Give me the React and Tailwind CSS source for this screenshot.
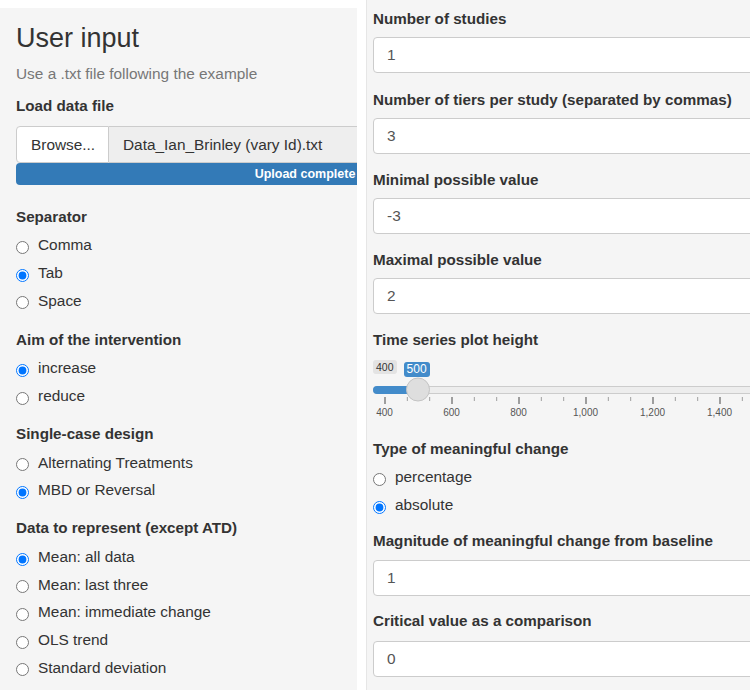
import React from "react";

function Radio({ name, label, checked }) {
  return (
    <label className="flex items-center h-[27.7px] gap-[9px] text-[#333]">
      <input
        type="radio"
        name={name}
        checked={checked}
        readOnly
        className="m-0 mt-[5px] w-[13px] h-[13px] shrink-0"
      />
      <span>{label}</span>
    </label>
  );
}

function Group({ name, title, options, selected, className = "" }) {
  return (
    <div className={className}>
      <div className="h-[28px] flex items-center font-bold text-[15.2px] text-[#333]">{title}</div>
      {options.map((o) => (
        <Radio key={o} name={name} label={o} checked={o === selected} />
      ))}
    </div>
  );
}

function Field({ label, value, className = "", gap = "mt-[3.5px]" }) {
  return (
    <div className={className}>
      <div className="h-[28px] flex items-center font-bold text-[15.2px] text-[#333] whitespace-nowrap">
        {label}
      </div>
      <div
        className={`${gap} w-[440px] h-[36px] bg-white border border-[#ccc] rounded-[4px] flex items-center pl-[13px] text-[#555]`}
      >
        {value}
      </div>
    </div>
  );
}

// range slider: 400 .. ~1600, value 500, 67px per 200
function Slider() {
  const toX = (v) => 11.5 + ((v - 400) * 67) / 200;
  const majors = [400, 600, 800, 1000, 1200, 1400];
  const minors = [];
  [...majors, 1600].forEach((m) => {
    minors.push(m + 200 / 3, m + 400 / 3);
  });
  const handle = toX(500);

  return (
    <div className="h-[81px] pt-[6px]">
      <div className="flex items-start h-[17px]">
        <span className="h-[14px] px-[3px] rounded-[3px] bg-[#e3e3e3] text-[#333] text-[10.5px] leading-[14px]">
          400
        </span>
        <span className="ml-[7px] mt-[1.5px] h-[15px] px-[3px] rounded-[3px] bg-[#428bca] text-white text-[12px] leading-[15px]">
          500
        </span>
      </div>
      <svg width="400" height="28" className="block">
        <rect x="0.5" y="9.5" width="420" height="7" rx="3.5" fill="#ededed" stroke="#ccc" />
        <path d={`M4 9h${handle - 4}v8H4a4 4 0 0 1 0-8z`} fill="#428bca" />
        {minors.map((v) => (
          <rect key={v} x={toX(v)} y="20" width="1" height="4" fill="#000" opacity="0.35" />
        ))}
        {majors.map((v) => (
          <rect key={v} x={toX(v)} y="20" width="1" height="7" fill="#000" opacity="0.7" />
        ))}
        <circle cx={handle} cy="12.5" r="11.5" fill="#dedede" stroke="#c4c4c4" />
      </svg>
      <div className="mt-[2px] -ml-[22px] flex text-[10px] leading-[12px] text-[#555]">
        {majors.map((v) => (
          <span key={v} className="w-[67px] shrink-0 text-center">
            {v.toLocaleString("en-US")}
          </span>
        ))}
      </div>
    </div>
  );
}

export default function App() {
  return (
    <div className="w-[750px] h-[690px] bg-white flex overflow-hidden font-['Liberation_Sans',Arial,sans-serif] text-[15.4px]">
      <div className="mt-[8px] w-[357px] shrink-0 h-[682px] bg-[#f5f5f5] overflow-hidden pl-[16px] pt-[14px]">
        <h2 className="h-[32px] leading-[32px] text-[27px] text-[#333]">User input</h2>
        <p className="mt-[6px] h-[28px] flex items-center text-[#777]">Use a .txt file following the example</p>
        <div className="mt-[4px] h-[28px] flex items-center font-bold text-[15.2px] text-[#333]">Load data file</div>
        <div className="mt-[6px] w-[578px]">
          <div className="flex h-[37px]">
            <div className="w-[93px] shrink-0 bg-white border border-[#ccc] rounded-l-[4px] flex items-center pl-[14px] text-[#333]">
              Browse...
            </div>
            <div className="flex-1 bg-[#eee] border border-l-0 border-[#ccc] flex items-center pl-[14px] text-[#333]">
              Data_Ian_Brinley (vary Id).txt
            </div>
          </div>
          <div className="h-[22px] rounded-[4px] bg-[#337ab7] text-white font-bold text-[12.5px] flex items-center justify-center">
            Upload complete
          </div>
        </div>
        <Group
          className="mt-[18px]"
          name="sep"
          title="Separator"
          options={["Comma", "Tab", "Space"]}
          selected="Tab"
        />
        <Group
          className="mt-[12px]"
          name="aim"
          title="Aim of the intervention"
          options={["increase", "reduce"]}
          selected="increase"
        />
        <Group
          className="mt-[11px]"
          name="design"
          title="Single-case design"
          options={["Alternating Treatments", "MBD or Reversal"]}
          selected="MBD or Reversal"
        />
        <Group
          className="mt-[11px]"
          name="data"
          title="Data to represent (except ATD)"
          options={[
            "Mean: all data",
            "Mean: last three",
            "Mean: immediate change",
            "OLS trend",
            "Standard deviation",
          ]}
          selected="Mean: all data"
        />
      </div>
      <div className="ml-[9px] flex-1 h-[690px] bg-[#f5f5f5] border-l border-[#e6e6e6] overflow-hidden pl-[6px] pt-[5px]">
        <Field label="Number of studies" value="1" />
        <Field className="mt-[13.5px]" label="Number of tiers per study (separated by commas)" value="3" />
        <Field className="mt-[12.5px]" label="Minimal possible value" value="-3" />
        <Field className="mt-[12.5px]" label="Maximal possible value" value="2" />
        <div className="mt-[12.5px] h-[28px] flex items-center font-bold text-[15.2px] text-[#333]">
          Time series plot height
        </div>
        <Slider />
        <Group
          name="type"
          title="Type of meaningful change"
          options={["percentage", "absolute"]}
          selected="absolute"
        />
        <Field className="mt-[8.6px]" gap="mt-[5px]" label="Magnitude of meaningful change from baseline" value="1" />
        <Field className="mt-[11px]" gap="mt-[6px]" label="Critical value as a comparison" value="0" />
      </div>
    </div>
  );
}
